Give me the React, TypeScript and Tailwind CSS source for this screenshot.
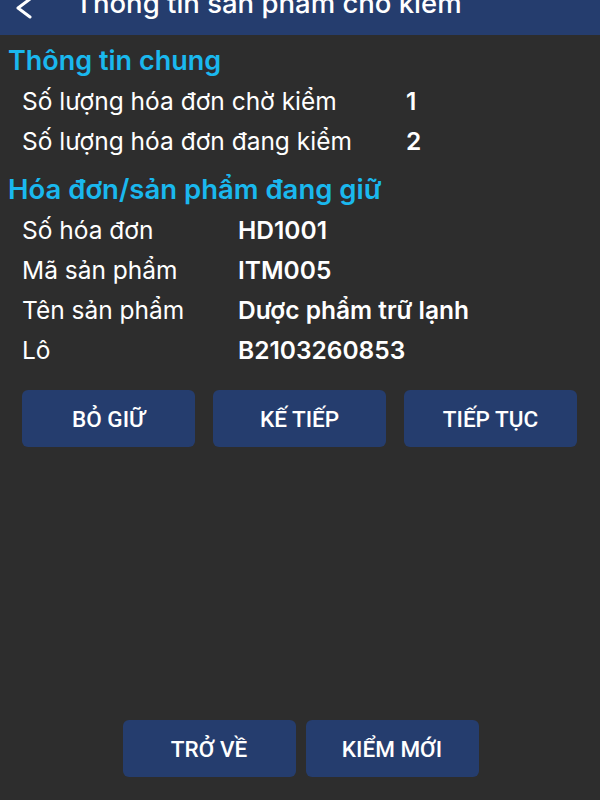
const font = { fontFamily: "Inter, 'Noto Sans', sans-serif" }

const Row = ({ label, value, w }: { label: string; value: string; w: string }) => (
  <div className="flex h-10 items-center pl-[22px] text-[24.5px] text-white">
    <div className={w}>{label}</div>
    <div className="font-semibold">{value}</div>
  </div>
)

const Btn = ({ label }: { label: string }) => (
  <button
    className="h-[57px] w-[173px] rounded-[6px] bg-[#253d6e] pt-[3px] text-[22.5px] font-medium text-white"
    style={{ fontFamily: "Roboto, sans-serif" }}
  >
    {label}
  </button>
)

export default function App() {
  return (
    <div className="flex h-screen w-full flex-col bg-[#2d2d2d]" style={font}>
      <div className="h-[35px] overflow-hidden bg-[#253d6e]">
        <div className="mt-[-16px] flex h-[40px] items-center text-white">
          <svg className="ml-[16px] mt-[14px] self-start" width="16" height="24" viewBox="0 0 16 24">
            <polyline points="14,1 2,10 14,19" fill="none" stroke="white" strokeWidth="3" strokeLinecap="round" strokeLinejoin="round" />
          </svg>
          <div className="ml-[43px] text-[27.5px] font-medium">Thông tin sản phẩm chờ kiểm</div>
        </div>
      </div>

      <div className="mt-[6px] flex h-[40px] items-center pl-[8px] text-[27px] font-semibold text-[#1ab8ee]">
        Thông tin chung
      </div>
      <Row label="Số lượng hóa đơn chờ kiểm" value="1" w="w-[384px]" />
      <Row label="Số lượng hóa đơn đang kiểm" value="2" w="w-[384px]" />

      <div className="mt-[9px] flex h-[40px] items-center pl-[8px] text-[27.5px] font-semibold text-[#1ab8ee]">
        Hóa đơn/sản phẩm đang giữ
      </div>
      <Row label="Số hóa đơn" value="HD1001" w="w-[216px]" />
      <Row label="Mã sản phẩm" value="ITM005" w="w-[216px]" />
      <Row label="Tên sản phẩm" value="Dược phẩm trữ lạnh" w="w-[216px]" />
      <Row label="Lô" value="B2103260853" w="w-[216px]" />

      <div className="mt-[20px] flex gap-[18px] pl-[22px]">
        <Btn label="BỎ GIỮ" />
        <Btn label="KẾ TIẾP" />
        <Btn label="TIẾP TỤC" />
      </div>

      <div className="mt-auto mb-[23px] flex justify-center gap-[10px] pl-[1px]">
        <Btn label="TRỞ VỀ" />
        <Btn label="KIỂM MỚI" />
      </div>
    </div>
  )
}
